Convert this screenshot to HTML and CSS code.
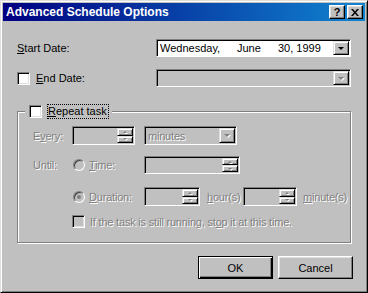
FILE: index.html
```html
<!DOCTYPE html>
<html>
<head>
  <meta charset="UTF-8">
  <title>Advanced Schedule Options</title>
  <link rel="stylesheet" href="styles.css">
</head>
<body>
  <div class="window">
    <div class="titlebar">
      <span class="title">Advanced Schedule Options</span>
      <div class="tb-btns">
        <span class="tb-btn help">?</span>
        <span class="tb-btn close">
          <svg width="8" height="7" viewBox="0 0 8 7"><path d="M0 0h2l2 2.4 2-2.4h2l-3 3.5 3 3.5h-2l-2-2.4-2 2.4h-2l3-3.5z" fill="#000"/></svg>
        </span>
      </div>
    </div>

    <div class="content">
      <div class="row">
        <span class="lbl w-start"><u>S</u>tart Date:</span>
        <div class="field combo w-date">
          <div class="value"><span class="wd">Wednesday,</span><span class="mo">June</span><span>30, 1999</span></div>
          <span class="drop"><i class="arrow"></i></span>
        </div>
      </div>

      <div class="row r-end">
        <span class="check"></span>
        <span class="lbl w-end"><u>E</u>nd Date:</span>
        <div class="field combo off w-date">
          <div class="value"></div>
          <span class="drop"><i class="arrow dim"></i></span>
        </div>
      </div>

      <div class="group">
        <div class="legend">
          <span class="check"></span>
          <span class="focus"><u>R</u>epeat task</span>
        </div>

        <div class="grow r-every">
          <span class="lbl dis w-glbl">E<u>v</u>ery:</span>
          <div class="field spin off w-every">
            <div class="value"></div>
            <div class="spinbtns"><span class="sb"><i class="up"></i></span><span class="sb"><i class="down"></i></span></div>
          </div>
          <div class="field combo off w-min">
            <div class="value dis">minutes</div>
            <span class="drop"><i class="arrow dim"></i></span>
          </div>
        </div>

        <div class="grow r-until">
          <span class="lbl dis w-glbl">Until:</span>
          <span class="radio"></span>
          <span class="lbl dis w-opt"><u>T</u>ime:</span>
          <div class="field spin off w-time">
            <div class="value"></div>
            <div class="spinbtns"><span class="sb"><i class="up"></i></span><span class="sb"><i class="down"></i></span></div>
          </div>
        </div>

        <div class="grow r-dur">
          <span class="w-glbl"></span>
          <span class="radio on"></span>
          <span class="lbl dis w-opt"><u>D</u>uration:</span>
          <div class="field spin off w-hours">
            <div class="value"></div>
            <div class="spinbtns"><span class="sb"><i class="up"></i></span><span class="sb"><i class="down"></i></span></div>
          </div>
          <span class="lbl dis w-unit"><u>h</u>our(s)</span>
          <div class="field spin off w-mins">
            <div class="value"></div>
            <div class="spinbtns"><span class="sb"><i class="up"></i></span><span class="sb"><i class="down"></i></span></div>
          </div>
          <span class="lbl dis unit2"><u>m</u>inute(s)</span>
        </div>

        <div class="grow r-stop">
          <span class="check off"></span>
          <span class="lbl dis stop-lbl">If the task is still running, st<u>o</u>p it at this time.</span>
        </div>
      </div>

      <div class="buttons">
        <button class="btn default">OK</button>
        <button class="btn">Cancel</button>
      </div>
    </div>
  </div>
</body>
</html>
```

FILE: styles.css
```css
body {
  margin: 0;
  font-family: "Liberation Sans", Arial, sans-serif;
  font-size: 11px;
  background: #c0c0c0;
  color: #000;
}

.window {
  width: 368px;
  height: 293px;
  box-sizing: border-box;
  border: 1px solid;
  border-color: #dfdfdf #000 #000 #dfdfdf;
  box-shadow: inset 1px 1px #fff, inset -1px -1px #808080;
  padding: 2px;
  background: #c0c0c0;
  display: flex;
  flex-direction: column;
}

/* title bar */
.titlebar {
  height: 18px;
  flex: none;
  display: flex;
  align-items: center;
  padding: 0 2px 0 3px;
  background: linear-gradient(to right, #000080, #1084d0);
  color: #fff;
}

.title {
  font-weight: bold;
  font-size: 12px;
}

.tb-btns {
  margin-left: auto;
  display: flex;
  gap: 2px;
}

.tb-btn {
  width: 16px;
  height: 14px;
  box-sizing: border-box;
  border: 1px solid;
  border-color: #fff #000 #000 #fff;
  box-shadow: inset -1px -1px #808080, inset 1px 1px #dfdfdf;
  background: #c0c0c0;
  color: #000;
  display: flex;
  align-items: center;
  justify-content: center;
  font-weight: bold;
  font-size: 11px;
  line-height: 1;
}

.tb-btn svg { display: block; }

/* body */
.content {
  flex: 1;
  padding: 18px 12px 0 14px;
  display: flex;
  flex-direction: column;
}

.row {
  display: flex;
  align-items: center;
  height: 18px;
}

.r-end { margin-top: 12px; }

.lbl { white-space: nowrap; }
.w-start { width: 139px; }
.w-end { width: 120px; margin-left: 6px; }

.dis {
  color: #808080;
  text-shadow: 1px 1px 0 #fff;
  letter-spacing: -0.2px;
}

/* sunken fields */
.field {
  box-sizing: border-box;
  border: 1px solid;
  border-color: #808080 #fff #fff #808080;
  box-shadow: inset 1px 1px #000;
  background: #fff;
  padding: 1px;
  display: flex;
  height: 100%;
}

.field.off { background: #c0c0c0; }

.field .value {
  flex: 1;
  display: flex;
  align-items: center;
  padding-left: 2px;
  white-space: nowrap;
}

.w-date { width: 195px; }
.wd { display: inline-block; width: 77px; }
.mo { display: inline-block; width: 41px; }

.drop, .sb {
  box-sizing: border-box;
  border: 1px solid;
  border-color: #dfdfdf #000 #000 #dfdfdf;
  box-shadow: inset 1px 1px #fff, inset -1px -1px #808080;
  background: #c0c0c0;
  display: flex;
  align-items: center;
  justify-content: center;
}

.drop { width: 16px; }

.arrow {
  width: 0;
  height: 0;
  border-left: 3px solid transparent;
  border-right: 3px solid transparent;
  border-top: 3px solid #000;
}

.arrow.dim {
  border-top-color: #808080;
  filter: drop-shadow(1px 1px 0 #fff);
}

.spinbtns {
  width: 16px;
  display: flex;
  flex-direction: column;
}

.sb { flex: 1; }

.sb .up, .sb .down {
  width: 0;
  height: 0;
  border-left: 2px solid transparent;
  border-right: 2px solid transparent;
  filter: drop-shadow(1px 1px 0 #fff);
}

.sb .up { border-bottom: 2px solid #808080; }
.sb .down { border-top: 2px solid #808080; }

/* checkbox + radio */
.check {
  flex: none;
  width: 13px;
  height: 13px;
  box-sizing: border-box;
  border: 1px solid;
  border-color: #808080 #fff #fff #808080;
  box-shadow: inset 1px 1px #000, inset -1px -1px #dfdfdf;
  background: #fff;
}

.check.off { background: #c0c0c0; }

.radio {
  flex: none;
  width: 12px;
  height: 12px;
  box-sizing: border-box;
  border-radius: 50%;
  border: 1px solid;
  border-color: #808080 #fff #fff #808080;
  box-shadow: inset 1px 1px #404040;
  background: #c0c0c0;
  display: flex;
  align-items: center;
  justify-content: center;
}

.radio.on::after {
  content: "";
  width: 4px;
  height: 4px;
  border-radius: 50%;
  background: #808080;
}

/* group box */
.group {
  margin-top: 24px;
  width: 334px;
  height: 132px;
  box-sizing: border-box;
  border: 1px solid #808080;
  box-shadow: inset 1px 1px #fff, 1px 1px #fff;
}

.legend {
  width: fit-content;
  height: 15px;
  margin: -8px 0 0 7px;
  padding: 0 3px 0 4px;
  background: #c0c0c0;
  display: flex;
  align-items: center;
}

.focus {
  margin-left: 5px;
  height: 15px;
  box-sizing: border-box;
  border: 1px dotted #000;
  padding-right: 1px;
  line-height: 13px;
}

.grow {
  display: flex;
  align-items: center;
  margin-left: 15px;
}

.r-every { margin-top: 7px; height: 19px; }
.r-until { margin-top: 11px; height: 18px; }
.r-dur { margin-top: 13px; height: 19px; }
.r-stop { margin-top: 9px; height: 13px; margin-left: 54px; }

.w-glbl { width: 40px; flex: none; }
.r-every .w-glbl { width: 39px; }
.w-opt { width: 55px; margin-left: 4px; }

.w-every { width: 63px; margin-right: 9px; }
.w-min { width: 93px; }
.w-time { width: 96px; }
.w-hours { width: 56px; }
.w-unit { width: 36px; margin-left: 7px; }
.w-mins { width: 54px; }
.unit2 { margin-left: 6px; }
.stop-lbl { margin-left: 5px; }

/* buttons */
.buttons {
  margin-top: 13px;
  display: flex;
  justify-content: flex-end;
  gap: 5px;
}

.btn {
  width: 75px;
  height: 23px;
  box-sizing: border-box;
  font-family: "Liberation Sans", Arial, sans-serif;
  font-size: 11px;
  color: #000;
  background: #c0c0c0;
  border: 1px solid;
  border-color: #fff #000 #000 #fff;
  box-shadow: inset -1px -1px #808080, inset 1px 1px #dfdfdf;
  padding: 0;
}

.btn.default {
  border-color: #000;
  box-shadow: inset 1px 1px #fff, inset -1px -1px #000, inset -2px -2px #808080;
}
```
